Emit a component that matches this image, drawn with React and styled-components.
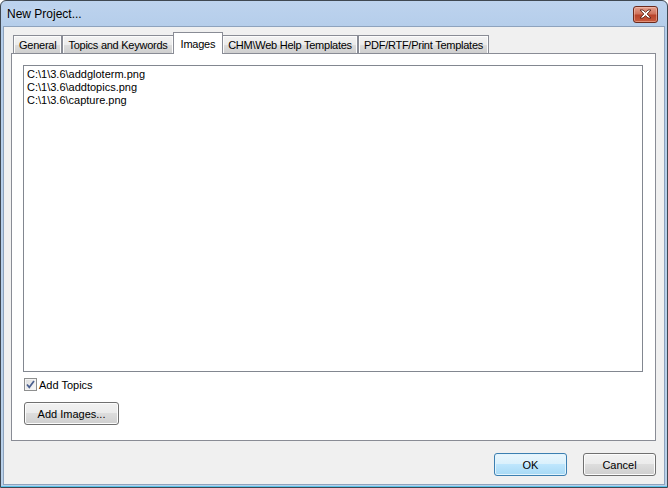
import React, { useState } from "react";
import styled, { createGlobalStyle, css } from "styled-components";

const tabs = [
	"General",
	"Topics and Keywords",
	"Images",
	"CHM\\Web Help Templates",
	"PDF/RTF/Print Templates"
];

const images = [
	"C:\\1\\3.6\\addgloterm.png",
	"C:\\1\\3.6\\addtopics.png",
	"C:\\1\\3.6\\capture.png"
];

export default function App() {
	const [active, setActive] = useState(2);
	const [addTopics, setAddTopics] = useState(true);

	return (
		<>
			<GlobalStyle />
			<Window>
				<TitleBar>
					<Title>New Project...</Title>
					<CloseButton aria-label="Close">
						<svg width="13" height="10" viewBox="0 0 13 10">
							<path
								d="M1 1h3l2.5 2.3L9 1h3L8.2 5 12 9H9L6.5 6.7 4 9H1l3.8-4z"
								fill="#fff"
								stroke="#5a2418"
								strokeWidth="0.9"
								strokeLinejoin="round"
							/>
						</svg>
					</CloseButton>
				</TitleBar>
				<Client>
					<TabStrip>
						{tabs.map((tab, index) => (
							<Tab key={tab} $active={index === active} onClick={() => setActive(index)}>
								{tab}
							</Tab>
						))}
					</TabStrip>
					<TabPanel>
						<ImageList>
							{images.map((path) => (
								<li key={path}>{path}</li>
							))}
						</ImageList>
						<CheckRow onClick={() => setAddTopics(!addTopics)}>
							<CheckBox>
								{addTopics && (
									<svg width="9" height="9" viewBox="0 0 9 9">
										<path d="M1 4.5l2.3 2.8L8 1" fill="none" stroke="#4a5f8f" strokeWidth="1.7" />
									</svg>
								)}
							</CheckBox>
							<span>Add Topics</span>
						</CheckRow>
						<Button $width={95}>Add Images...</Button>
					</TabPanel>
					<Footer>
						<Button $width={73} $default>OK</Button>
						<Button $width={73}>Cancel</Button>
					</Footer>
				</Client>
			</Window>
		</>
	);
}

const GlobalStyle = createGlobalStyle`
	html, body {
		margin: 0;
		background: #ffffff;
	}

	body {
		font-family: "Liberation Sans", Arial, sans-serif;
		font-size: 11px;
		color: #000;
	}
`

const Window = styled.div`
	width: 668px;
	height: 488px;
	box-sizing: border-box;
	display: flex;
	flex-direction: column;
	border: 1px solid #3f4852;
	border-radius: 6px 6px 0 0;
	padding: 0 2px 2px;
	background: linear-gradient(#bdd3ee, #b4cdea 30px, #b9d1ea);
	box-shadow: inset 0 -1px 0 #5bc3ea;
`

const TitleBar = styled.div`
	height: 25px;
	display: flex;
	align-items: center;
	justify-content: space-between;
	padding: 0 7px 0 4px;
	flex-shrink: 0;
`

const Title = styled.span`
	font-size: 12px;
	color: #000;
	text-shadow: 0 0 6px rgba(255, 255, 255, 0.6);
`

const CloseButton = styled.button`
	width: 25px;
	height: 17px;
	padding: 0;
	margin-top: 1px;
	display: flex;
	align-items: center;
	justify-content: center;
	border: 1px solid #6b2a1d;
	border-radius: 3px;
	background: linear-gradient(#e3a08f, #d0735c 45%, #b8432b 55%, #c85b3e);
	box-shadow: inset 0 0 0 1px rgba(255, 210, 195, 0.45);
`

const Client = styled.div`
	flex: 1;
	display: flex;
	flex-direction: column;
	border: 1px solid #8ea3bd;
	background: #f0f0f0;
	padding: 5px 8px 0 7px;
`

const TabStrip = styled.div`
	height: 21px;
	display: flex;
	align-items: flex-end;
	padding-left: 2px;
`

const Tab = styled.div`
	box-sizing: border-box;
	height: 18px;
	padding: 1px 5px 0;
	display: flex;
	align-items: center;
	white-space: nowrap;
	letter-spacing: -0.25px;
	border: 1px solid #898c95;
	border-bottom: none;
	background: linear-gradient(#f3f3f3, #ebebeb 50%, #dddddd 50%, #cfcfcf);
	box-shadow: inset 1px 1px 0 #fcfcfc, inset -1px 0 0 #fcfcfc;
	cursor: default;

	${props => props.$active && css`
		height: 22px;
		padding: 0 7px;
		margin: 0 -1px -1px;
		position: relative;
		z-index: 1;
		background: #ffffff;
		box-shadow: none;
	`}
`

const TabPanel = styled.div`
	height: 388px;
	box-sizing: border-box;
	display: flex;
	flex-direction: column;
	align-items: flex-start;
	border: 1px solid #898c95;
	background: #ffffff;
	padding: 11px 12px 0 11px;
`

const ImageList = styled.ul`
	align-self: stretch;
	height: 307px;
	box-sizing: border-box;
	margin: 0;
	padding: 2px 3px;
	list-style: none;
	border: 1px solid #828790;
	background: #ffffff;

	li {
		line-height: 13px;
		white-space: nowrap;
	}
`

const CheckRow = styled.label`
	display: flex;
	align-items: center;
	gap: 2px;
	height: 13px;
	margin: 6px 0 11px 1px;
	cursor: default;
`

const CheckBox = styled.span`
	width: 13px;
	height: 13px;
	box-sizing: border-box;
	display: flex;
	align-items: center;
	justify-content: center;
	border: 1px solid #8e8f8f;
	background: linear-gradient(135deg, #dcdcdc, #fbfbfb);
	box-shadow: inset 0 0 0 1px #f4f4f4;
`

const Button = styled.button`
	width: ${props => props.$width}px;
	height: 23px;
	padding: 0;
	margin-left: 1px;
	font-family: inherit;
	font-size: 11px;
	color: #000;
	border: 1px solid #707070;
	border-radius: 3px;
	background: linear-gradient(#f2f2f2, #ebebeb 50%, #dddddd 50%, #cfcfcf);
	box-shadow: inset 0 0 0 1px #fcfcfc;

	${props => props.$default && css`
		border-color: #3c7fb1;
		background: linear-gradient(#eaf6fd, #d9f0fc 50%, #bee6fd 50%, #a7d9f5);
		box-shadow: inset 0 0 0 1px #e2f4fd;
	`}
`

const Footer = styled.div`
	display: flex;
	justify-content: flex-end;
	gap: 15px;
	margin-top: 12px;
`
